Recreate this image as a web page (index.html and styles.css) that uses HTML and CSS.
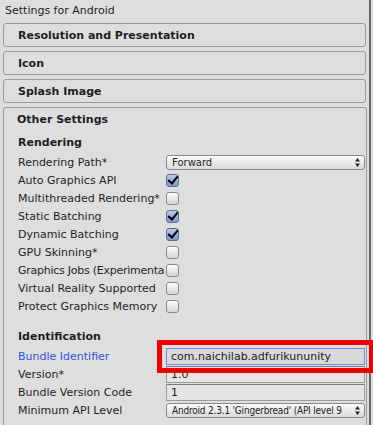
FILE: index.html
```html
<!DOCTYPE html>
<html lang="en">
<head>
    <meta charset="UTF-8">
    <title>Settings for Android</title>
    <link rel="stylesheet" href="styles.css">
</head>
<body>

<div class="panel">
    <div class="title">Settings for Android</div>

    <div class="foldout">Resolution and Presentation</div>
    <div class="foldout">Icon</div>
    <div class="foldout">Splash Image</div>

    <div class="section">
        <div class="section-head">Other Settings</div>

        <div class="group">Rendering</div>
        <div class="row">
            <span class="label">Rendering Path*</span>
            <div class="popup">
                <span>Forward</span>
                <svg class="arrows" width="5" height="9" viewBox="0 0 5 9"><path d="M2.5 0L5 3.5H0Z M2.5 9L5 5.5H0Z" fill="#222"/></svg>
            </div>
        </div>
        <div class="row"><span class="label">Auto Graphics API</span><span class="check on"></span></div>
        <div class="row"><span class="label">Multithreaded Rendering*</span><span class="check"></span></div>
        <div class="row"><span class="label">Static Batching</span><span class="check on"></span></div>
        <div class="row"><span class="label">Dynamic Batching</span><span class="check on"></span></div>
        <div class="row"><span class="label">GPU Skinning*</span><span class="check"></span></div>
        <div class="row"><span class="label tight">Graphics Jobs (Experimenta</span><span class="check"></span></div>
        <div class="row"><span class="label">Virtual Reality Supported</span><span class="check"></span></div>
        <div class="row"><span class="label">Protect Graphics Memory</span><span class="check"></span></div>

        <div class="group gap">Identification</div>
        <div class="row">
            <span class="label link">Bundle Identifier</span>
            <div class="field focus">com.naichilab.adfurikununity<span class="mark"></span></div>
        </div>
        <div class="row"><span class="label">Version*</span><div class="field">1.0</div></div>
        <div class="row"><span class="label">Bundle Version Code</span><div class="field">1</div></div>
        <div class="row">
            <span class="label">Minimum API Level</span>
            <div class="popup">
                <span class="narrow">Android 2.3.1 'Gingerbread' (API level 9</span>
                <svg class="arrows" width="5" height="9" viewBox="0 0 5 9"><path d="M2.5 0L5 3.5H0Z M2.5 9L5 5.5H0Z" fill="#222"/></svg>
            </div>
        </div>
    </div>
</div>

</body>
</html>
```

FILE: styles.css
```css
body {
    margin: 0;
    background-color: #dedede;
    font-family: "DejaVu Sans", Verdana, sans-serif;
    font-size: 11px;
    color: #1e1e1e;
    overflow: hidden;
}
.panel {
    width: 371px;
    height: 425px;
    border-right: 2px solid #6a6a6a;
    box-sizing: border-box;
}
.title {
    height: 23px;
    line-height: 22px;
    padding-left: 5px;
}
.foldout {
    height: 22px;
    line-height: 23px;
    margin: 0 3px 4px 3px;
    padding-left: 14px;
    border: 1px solid #9a9a9a;
    border-radius: 3px;
    font-weight: bold;
}
.section {
    margin: 0 2px 0 3px;
    height: 320px;
    border: 1px solid #9a9a9a;
    border-bottom: none;
    border-radius: 3px 3px 0 0;
}
.section-head {
    height: 23px;
    line-height: 23px;
    padding-left: 13px;
    font-weight: bold;
    margin-bottom: 2px;
}
.group {
    height: 18px;
    line-height: 19px;
    padding-left: 14px;
    font-weight: bold;
    margin-bottom: 2px;
}
.group.gap {
    margin-top: 12px;
}
.row {
    display: flex;
    align-items: center;
    height: 18px;
    padding-left: 14px;
}
.label {
    width: 148px;
    flex: none;
    white-space: nowrap;
    overflow: hidden;
    padding-top: 1px;
}
.label.tight {
    letter-spacing: -0.25px;
}
.label.link {
    color: #3355dd;
}
.check {
    width: 11px;
    height: 11px;
    border: 1px solid #8a8a8a;
    border-radius: 3px;
    background: linear-gradient(#fdfdfd, #d4d4d4);
    position: relative;
}
.check.on {
    background: linear-gradient(#b8c9ea, #7d98cc);
    border-color: #5d6f93;
}
.check.on::after {
    content: "";
    position: absolute;
    left: 3px;
    top: -1px;
    width: 4px;
    height: 8px;
    border: solid #000;
    border-width: 0 2px 2px 0;
    transform: rotate(40deg);
}
.popup {
    width: 188px;
    height: 13px;
    border: 1px solid #8a8a8a;
    border-radius: 3px;
    background: linear-gradient(#fbfbfb, #dadada);
    display: flex;
    align-items: center;
    justify-content: space-between;
    padding: 0 4px 0 5px;
    font-size: 10px;
    white-space: nowrap;
}
.popup .narrow {
    font-family: "DejaVu Sans Condensed", "DejaVu Sans", sans-serif;
    letter-spacing: -0.2px;
}
.arrows {
    flex: none;
    margin-left: 2px;
}
.field {
    position: relative;
    width: 193px;
    height: 15px;
    line-height: 16px;
    padding-left: 4px;
    border: 1px solid #9c9c9c;
    border-top-color: #7c7c7c;
    background-color: #e4e4e4;
    font-size: 11px;
}
.field.focus {
    border-color: #6c8fe6;
    background-color: #d9d9d9;
}
.mark {
    position: absolute;
    z-index: 1;
    left: -10px;
    top: -9px;
    width: 207px;
    height: 23px;
    border: 5px solid #ee0000;
}
```
